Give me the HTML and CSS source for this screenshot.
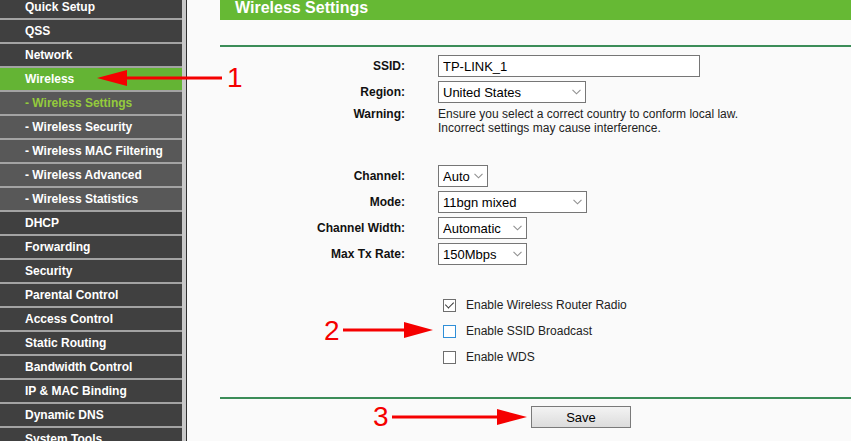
FILE: index.html
```html
<!DOCTYPE html>
<html lang="en">
<head>
    <meta charset="UTF-8">
    <title>Wireless Settings</title>
    <link rel="stylesheet" href="styles.css">
</head>
<body>
    <div class="page">
        <nav class="menu">
            <div class="item">Quick Setup</div>
            <div class="item">QSS</div>
            <div class="item">Network</div>
            <div class="item active">Wireless</div>
            <div class="item sub current">- Wireless Settings</div>
            <div class="item sub">- Wireless Security</div>
            <div class="item sub">- Wireless MAC Filtering</div>
            <div class="item sub">- Wireless Advanced</div>
            <div class="item sub">- Wireless Statistics</div>
            <div class="item">DHCP</div>
            <div class="item">Forwarding</div>
            <div class="item">Security</div>
            <div class="item">Parental Control</div>
            <div class="item">Access Control</div>
            <div class="item">Static Routing</div>
            <div class="item">Bandwidth Control</div>
            <div class="item">IP &amp; MAC Binding</div>
            <div class="item">Dynamic DNS</div>
            <div class="item">System Tools</div>
        </nav>

        <main class="content">
            <div class="title">Wireless Settings</div>
            <div class="rule"></div>

            <div class="form">
                <div class="row">
                    <label class="label" for="ssid">SSID:</label>
                    <input class="text" id="ssid" type="text" value="TP-LINK_1">
                </div>
                <div class="row">
                    <label class="label" for="region">Region:</label>
                    <select class="pick w-region" id="region"><option>United States</option></select>
                </div>
                <div class="row warning">
                    <span class="label">Warning:</span>
                    <p class="note">Ensure you select a correct country to conform local law.<br>Incorrect settings may cause interference.</p>
                </div>

                <div class="group">
                    <div class="row">
                        <label class="label" for="channel">Channel:</label>
                        <select class="pick w-channel" id="channel"><option>Auto</option></select>
                    </div>
                    <div class="row">
                        <label class="label" for="mode">Mode:</label>
                        <select class="pick w-mode" id="mode"><option>11bgn mixed</option></select>
                    </div>
                    <div class="row">
                        <label class="label" for="width">Channel Width:</label>
                        <select class="pick w-rate" id="width"><option>Automatic</option></select>
                    </div>
                    <div class="row">
                        <label class="label" for="rate">Max Tx Rate:</label>
                        <select class="pick w-rate" id="rate"><option>150Mbps</option></select>
                    </div>
                </div>

                <div class="checks">
                    <label class="check"><input type="checkbox" checked> Enable Wireless Router Radio</label>
                    <label class="check"><input type="checkbox" class="focus"> Enable SSID Broadcast</label>
                    <label class="check"><input type="checkbox"> Enable WDS</label>
                </div>
            </div>

            <div class="rule bottom"></div>
            <div class="actions">
                <button class="save">Save</button>
            </div>
        </main>

        <!-- red annotation arrows -->
        <svg class="marks" width="851" height="441" viewBox="0 0 851 441">
            <g fill="#f50000" stroke="#f50000">
                <line x1="124" y1="78" x2="222" y2="78" stroke-width="3"/>
                <polygon points="97,78 127,70 127,86" stroke="none"/>
                <line x1="343" y1="330" x2="407" y2="330" stroke-width="3"/>
                <polygon points="433,330 404,322 404,338" stroke="none"/>
                <line x1="392" y1="417" x2="499" y2="417" stroke-width="3"/>
                <polygon points="527,417 497,409 497,425" stroke="none"/>
            </g>
            <g class="digits" fill="#f50000">
                <text x="227" y="87">1</text>
                <text x="324" y="340">2</text>
                <text x="373" y="426">3</text>
            </g>
        </svg>
    </div>
</body>
</html>
```

FILE: styles.css
```css
body {
    margin: 0;
    font-family: "Liberation Sans", Arial, sans-serif;
    background: #fafafa;
    overflow: hidden;
}
.page {
    position: relative;
    display: flex;
    height: 441px;
    overflow: hidden;
}
.menu {
    width: 182px;
    flex-shrink: 0;
    margin-top: -4px;
    border-right: 4px solid #c8c8c8;
    background: #a3a3a3;
}
.item {
    height: 22px;
    line-height: 22px;
    padding-left: 25px;
    border-bottom: 2px solid #a3a3a3;
    background: #404040;
    color: #fff;
    font-size: 12px;
    font-weight: bold;
    white-space: nowrap;
}
.item.active {
    background: #64b434;
}
.item.sub {
    background: #585858;
}
.item.current {
    color: #94cb3c;
}
.content {
    flex: 1;
    border-left: 1px solid #2f2f2f;
    padding-left: 33px;
    background: #fafafa;
}
.title {
    height: 20px;
    line-height: 16px;
    padding-left: 15px;
    background: #66b934;
    color: #fff;
    font-size: 16px;
    font-weight: bold;
}
.rule {
    height: 2px;
    margin-top: 25px;
    background: #3c8d58;
}
.rule.bottom {
    margin-top: 27px;
}
.form {
    margin-top: 8px;
    font-size: 12px;
    color: #222;
}
.row {
    display: flex;
    align-items: center;
    height: 22px;
    margin-bottom: 4px;
}
.label {
    width: 185px;
    margin-right: 33px;
    text-align: right;
    font-weight: bold;
    color: #111;
    flex-shrink: 0;
}
.text, .pick {
    box-sizing: border-box;
    height: 22px;
    margin: 0;
    padding: 0 0 0 4px;
    border: 1px solid #767676;
    border-radius: 0;
    background-color: #fff;
    font-family: "Liberation Sans", Arial, sans-serif;
    font-size: 13px;
    color: #000;
}
.text {
    width: 262px;
}
.pick {
    appearance: none;
    background-image: url("data:image/svg+xml;utf8,<svg xmlns='http://www.w3.org/2000/svg' width='9' height='6'><path d='M0.5 0.8l4 4 4-4' fill='none' stroke='%23909090' stroke-width='1.1'/></svg>");
    background-repeat: no-repeat;
    background-position: right 4px center;
}
.w-region {
    width: 148px;
}
.w-channel {
    width: 50px;
}
.w-mode {
    width: 149px;
}
.w-rate {
    width: 89px;
}
.row.warning {
    height: auto;
    align-items: flex-start;
    line-height: 14px;
    margin-bottom: 0;
}
.note {
    margin: 0;
    color: #222;
}
.group {
    margin-top: 30px;
}
.group .row:last-child {
    margin-bottom: 0;
}
.checks {
    margin-top: 27px;
    padding-left: 223px;
}
.check {
    display: flex;
    align-items: center;
    height: 26px;
    color: #222;
}
.check input {
    appearance: none;
    position: relative;
    width: 13px;
    height: 13px;
    margin: 0 10px 0 0;
    border: 1px solid #6e6e6e;
    background: #fff;
}
.check input:checked::after {
    content: "";
    position: absolute;
    left: 3px;
    top: 0;
    width: 4px;
    height: 7px;
    border: solid #333;
    border-width: 0 1.5px 1.5px 0;
    transform: rotate(45deg);
}
.check input.focus {
    border-color: #2f8fd8;
}
.actions {
    padding: 7px 0 0 311px;
}
.save {
    width: 100px;
    height: 22px;
    border: 1px solid #7a7a7a;
    background: linear-gradient(#f3f3f3, #dcdcdc);
    font-family: "Liberation Sans", Arial, sans-serif;
    font-size: 13px;
    color: #000;
}
.marks {
    position: absolute;
    top: 0;
    left: 0;
    pointer-events: none;
}
.digits {
    font-family: "Liberation Sans", Arial, sans-serif;
    font-size: 28px;
}
```
